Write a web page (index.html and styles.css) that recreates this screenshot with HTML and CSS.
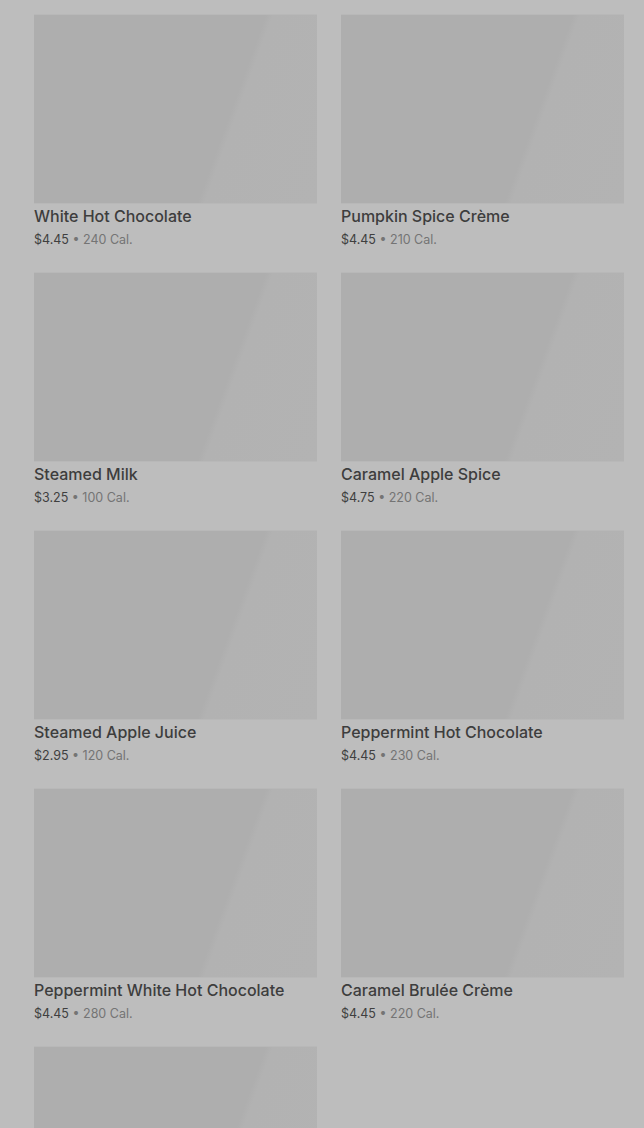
FILE: index.html
```html
<!DOCTYPE html>
<html lang="en">
<head>
    <meta charset="UTF-8">
    <meta name="viewport" content="width=device-width, initial-scale=1.0">
    <title>Hot Drinks</title>
    <link rel="stylesheet" href="styles.css">
</head>
<body>
<div class="menu-grid">
    <div class="product">
        <div class="product-image"></div>
        <div class="product-name">White Hot Chocolate</div>
        <div class="product-meta"><span class="price">$4.45</span> • 240 Cal.</div>
    </div>
    <div class="product">
        <div class="product-image"></div>
        <div class="product-name">Pumpkin Spice Crème</div>
        <div class="product-meta"><span class="price">$4.45</span> • 210 Cal.</div>
    </div>
    <div class="product">
        <div class="product-image"></div>
        <div class="product-name">Steamed Milk</div>
        <div class="product-meta"><span class="price">$3.25</span> • 100 Cal.</div>
    </div>
    <div class="product">
        <div class="product-image"></div>
        <div class="product-name">Caramel Apple Spice</div>
        <div class="product-meta"><span class="price">$4.75</span> • 220 Cal.</div>
    </div>
    <div class="product">
        <div class="product-image"></div>
        <div class="product-name">Steamed Apple Juice</div>
        <div class="product-meta"><span class="price">$2.95</span> • 120 Cal.</div>
    </div>
    <div class="product">
        <div class="product-image"></div>
        <div class="product-name">Peppermint Hot Chocolate</div>
        <div class="product-meta"><span class="price">$4.45</span> • 230 Cal.</div>
    </div>
    <div class="product">
        <div class="product-image"></div>
        <div class="product-name">Peppermint White Hot Chocolate</div>
        <div class="product-meta"><span class="price">$4.45</span> • 280 Cal.</div>
    </div>
    <div class="product">
        <div class="product-image"></div>
        <div class="product-name">Caramel Brulée Crème</div>
        <div class="product-meta"><span class="price">$4.45</span> • 220 Cal.</div>
    </div>
    <div class="product">
        <div class="product-image"></div>
    </div>
</div>
</body>
</html>
```

FILE: styles.css
```css
body {
    margin: 0;
    background-color: #bdbdbd;
    font-family: Inter, Roboto, "Noto Sans", Arial, sans-serif;
    overflow: hidden;
}
.menu-grid {
    display: grid;
    grid-template-columns: 283px 283px;
    column-gap: 24px;
    row-gap: 24px;
    padding: 15px 20px 0 34px;
}
.product-image {
    height: 188px;
    background: linear-gradient(110deg, #aeaeae 0%, #aeaeae 66%, #b2b2b2 68%, #b3b3b3 100%);
    box-shadow: 0 -1px 0 #b8b8b8, 0 1px 0 #b8b8b8;
}
.product-name {
    margin-top: 3px;
    font-size: 16px;
    line-height: 20px;
    font-weight: 500;
    color: #3d3d3d;
}
.product-meta {
    margin-top: 4px;
    font-size: 12.5px;
    line-height: 19px;
    color: #747474;
}
.price {
    color: #3f3f3f;
}
```
